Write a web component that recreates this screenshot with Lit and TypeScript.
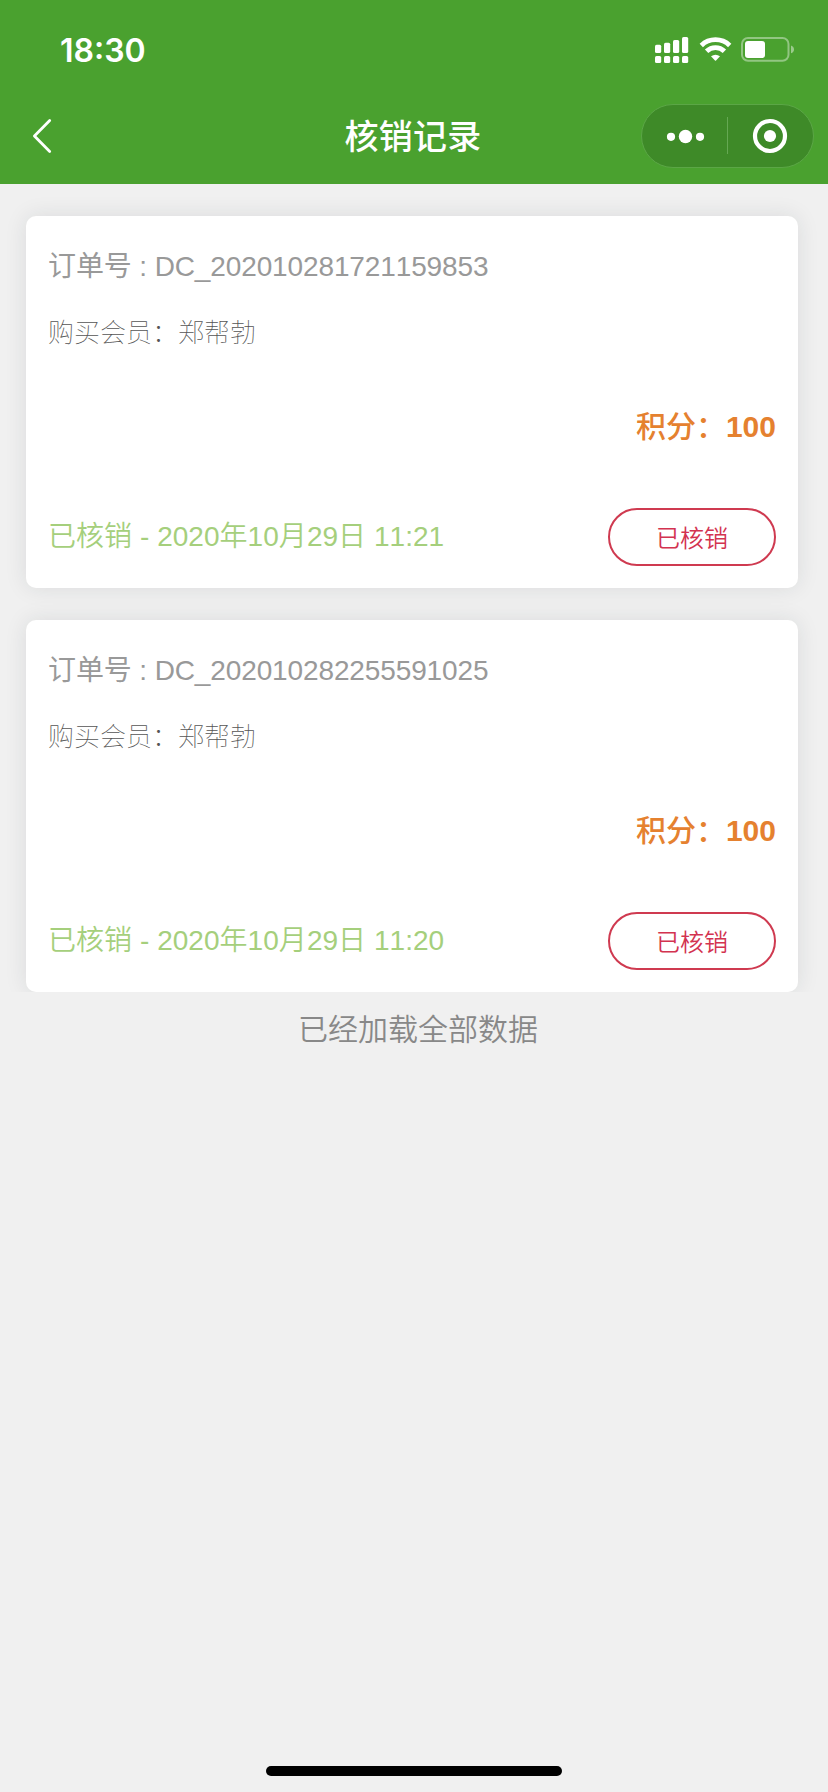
import { LitElement, html, css } from "lit";
import { customElement, property } from "lit/decorators.js";

interface RecordItem {
  order: string;
  member: string;
  points: number;
  date: string;
}

const records: RecordItem[] = [
  { order: "DC_202010281721159853", member: "郑帮勃", points: 100, date: "2020年10月29日 11:21" },
  { order: "DC_202010282255591025", member: "郑帮勃", points: 100, date: "2020年10月29日 11:20" },
];

@customElement("status-bar")
class StatusBar extends LitElement {
  static styles = css`
    :host {
      display: flex;
      justify-content: space-between;
      height: 88px;
      padding: 0 34px 0 60px;
      color: #fff;
    }
    .time {
      font: 600 32px/40px Inter, sans-serif;
      padding-top: 31px;
    }
    svg { display: block; margin-top: 36px; }
  `;
  render() {
    return html`
      <span class="time">18:30</span>
      <svg width="140" height="28" viewBox="654 36 140 28" fill="#fff">
        <rect x="655" y="44.7" width="6.2" height="8.3" rx="1.6" />
        <rect x="664" y="42.7" width="6.2" height="10.3" rx="1.6" />
        <rect x="673" y="40" width="6.2" height="13" rx="1.6" />
        <rect x="682" y="37" width="6.2" height="16" rx="1.6" />
        <rect x="655" y="56" width="6.2" height="7" rx="1.6" />
        <rect x="664" y="56" width="6.2" height="7" rx="1.6" />
        <rect x="673" y="56" width="6.2" height="7" rx="1.6" />
        <rect x="682" y="56" width="6.2" height="7" rx="1.6" />
        <g fill="none" stroke="#fff" stroke-width="4.8">
          <path d="M701.3 45.4A20.5 20.5 0 0 1 729.7 45.4" />
          <path d="M706.6 51.2A12.8 12.8 0 0 1 724.4 51.2" />
        </g>
        <path d="M711 56.3Q715.5 53 720 56.3L716 60.6Q715.5 61.1 715 60.6Z" />
        <rect x="742" y="38" width="46.5" height="22.8" rx="6" fill="none" stroke="#fff" stroke-opacity=".4" stroke-width="2" />
        <rect x="745" y="41" width="20" height="17" rx="3" />
        <path d="M791 45.5Q794 46.7 794 49.4T791 53.3Z" fill-opacity=".45" />
      </svg>
    `;
  }
}

@customElement("nav-bar")
class NavBar extends LitElement {
  static styles = css`
    :host {
      display: grid;
      grid-template-columns: 187px 1fr 187px;
      height: 96px;
      color: #fff;
      align-items: start;
    }
    .back { display: block; margin: 30px 0 0 31px; }
    .title {
      text-align: center;
      font: 500 34px/48px "Noto Sans CJK SC", sans-serif;
      letter-spacing: 0.3px;
      padding: 23px 2px 0 0;
    }
    .capsule {
      display: flex;
      box-sizing: border-box;
      width: 173px;
      height: 64px;
      margin-top: 16px;
      border: 1px solid #5ba646;
      border-radius: 32px;
      background: #3e8a28;
    }
    .capsule svg { display: block; }
  `;
  render() {
    return html`
      <svg class="back" width="24" height="36" viewBox="31 118 24 36" fill="none" stroke="#fff" stroke-width="2.8" stroke-linecap="round" stroke-linejoin="round">
        <path d="M49.7 120.6L34.4 136L49.7 151.4" />
      </svg>
      <div class="title">核销记录</div>
      <div class="capsule">
        <svg width="171" height="62" viewBox="642 105 171 62" fill="#fff">
          <circle cx="671" cy="136.8" r="4.1" />
          <circle cx="685.5" cy="136.5" r="6.7" />
          <circle cx="700" cy="136.8" r="4.1" />
          <rect x="727" y="117" width="1" height="37" fill="#65a853" />
          <circle cx="770" cy="136" r="15" fill="none" stroke="#fff" stroke-width="4.2" />
          <circle cx="770" cy="136" r="6.1" />
        </svg>
      </div>
    `;
  }
}

@customElement("record-card")
class RecordCard extends LitElement {
  @property({ attribute: false }) record!: RecordItem;
  static styles = css`
    :host {
      display: flex;
      flex-direction: column;
      box-sizing: border-box;
      height: 372px;
      padding: 29px 22px 22px;
      border-radius: 10px;
      background: #fff;
      box-shadow: 0 0 22px rgba(30, 35, 50, 0.1);
      font-family: "Liberation Sans", "Noto Sans CJK SC", sans-serif;
      font-kerning: none;
      white-space: pre;
    }
    .order { font-size: 28px; line-height: 44px; letter-spacing: -0.12px; color: #999; }
    .member {
      margin-top: 22px;
      font: 100 26px/40px "Noto Sans CJK SC", sans-serif;
      color: #555;
    }
    .points {
      margin-top: 51px;
      text-align: right;
      font-size: 30px;
      line-height: 44px;
      font-weight: 700;
      color: #e5812f;
    }
    .label { font-family: "Noto Sans CJK SC", sans-serif; font-weight: 500; }
    .foot {
      display: flex;
      justify-content: space-between;
      align-items: center;
      margin-top: auto;
    }
    .state {
      font-size: 28px;
      line-height: 44px;
      font-weight: 350;
      letter-spacing: 0.04px;
      color: #a5cf7c;
    }
    .button {
      box-sizing: border-box;
      width: 168px;
      height: 58px;
      border: 2px solid #cf3a50;
      border-radius: 29px;
      text-align: center;
      font: 350 24px/53px "Noto Sans CJK SC", sans-serif;
      color: #d33350;
    }
  `;
  render() {
    const r = this.record;
    return html`
      <div class="order">订单号 : ${r.order}</div>
      <div class="member">购买会员：${r.member}</div>
      <div class="points"><span class="label">积分：</span>${r.points}</div>
      <div class="foot">
        <div class="state">已核销 - ${r.date}</div>
        <div class="button">已核销</div>
      </div>
    `;
  }
}

@customElement("app-root")
class AppRoot extends LitElement {
  static styles = css`
    :host {
      display: flex;
      flex-direction: column;
      height: 1792px;
      background: #f0f0f0;
    }
    .header { background: #4aa12f; height: 184px; }
    .list {
      display: flex;
      flex-direction: column;
      gap: 32px;
      padding: 32px 30px 0 26px;
      overflow: hidden;
    }
    .end {
      padding-left: 8px;
      margin-top: 13px;
      text-align: center;
      font: 350 30px/44px "Noto Sans CJK SC", sans-serif;
      color: #888;
    }
    .home {
      width: 296px;
      height: 10px;
      margin: auto auto 16px;
      border-radius: 5px;
      background: #000;
    }
  `;
  render() {
    return html`
      <div class="header">
        <status-bar></status-bar>
        <nav-bar></nav-bar>
      </div>
      <div class="list">
        ${records.map((r) => html`<record-card .record=${r}></record-card>`)}
      </div>
      <div class="end">已经加载全部数据</div>
      <div class="home"></div>
    `;
  }
}
